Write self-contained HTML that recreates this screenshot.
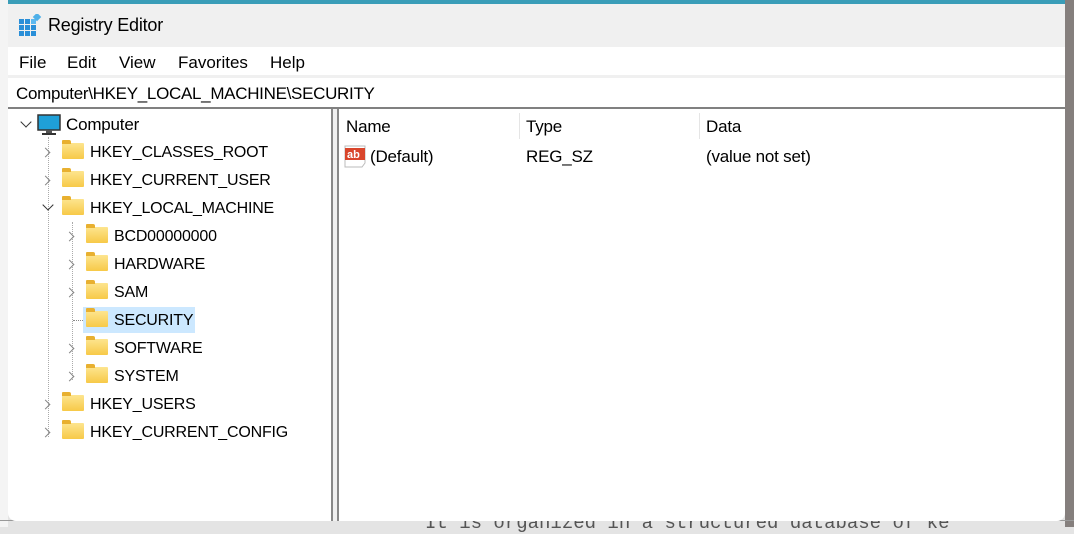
<!DOCTYPE html>
<html><head><style>
body{margin:0;width:1074px;height:527px;overflow:hidden;background:#e4e4e4;font-family:"Liberation Sans",sans-serif;position:relative;color:#000}
.abs{position:absolute}
.win{left:8px;top:4px;width:1057px;height:517px;background:#fff;border-radius:0 0 8px 8px;overflow:hidden}
.t{font-size:17px;white-space:nowrap}
.row{position:absolute;height:24px;line-height:24px;font-size:16px;white-space:nowrap;letter-spacing:-0.2px}
.fold{display:inline-block;width:22px;height:16px;vertical-align:-2px;margin-right:6px;position:relative;background:linear-gradient(#fde58f,#f7c948);border-radius:1px}
.fold:before{content:"";position:absolute;left:0;top:-3px;width:9px;height:4px;background:#e8b030;border-radius:1px 2px 0 0}
.chev{position:absolute;width:6px;height:6px;border-right:1.5px solid #888;border-bottom:1.5px solid #888;transform:rotate(-45deg)}
.chevd{position:absolute;width:7px;height:7px;border-right:1.5px solid #333;border-bottom:1.5px solid #333;transform:rotate(45deg)}
</style></head><body>
<div class="abs" style="left:0;top:0;width:1074px;height:4px;background:#3a9db8"></div>
<div class="abs" style="left:1065px;top:0;width:9px;height:527px;background:#857f7d"></div>
<div class="abs" style="left:0;top:0;width:8px;height:527px;background:#f4f4f4"></div>
<div class="abs t" style="left:425px;top:512px;font-family:'Liberation Mono',monospace;font-size:19px;color:#555">It is organized in a structured database of ke</div>
<div class="abs" style="left:0;top:520px;width:1074px;height:1px;background:#999"></div>
<div class="abs win">
 <div class="abs" style="left:0;top:0;width:1057px;height:43px;background:#f0f0f0"></div>
 <svg class="abs" style="left:11px;top:10px" width="24" height="24" viewBox="0 0 24 24">
  <g fill="#2a8fd8"><rect x="0" y="5" width="5" height="5"/><rect x="6" y="5" width="5" height="5"/><rect x="0" y="11" width="5" height="5"/><rect x="6" y="11" width="5" height="5"/><rect x="12" y="11" width="5" height="5"/><rect x="0" y="17" width="5" height="5"/><rect x="6" y="17" width="5" height="5"/><rect x="12" y="17" width="5" height="5"/><rect x="12" y="5" width="5" height="5" fill="#5bb8f0"/></g>
  <rect x="15" y="0" width="6" height="6" fill="#4fb0e8" transform="rotate(45 18 3)"/>
 </svg>
 <div class="abs t" style="left:40px;top:11px;font-size:18px;letter-spacing:-0.2px">Registry Editor</div>
 <div class="abs t" style="left:11px;top:49px">File</div>
 <div class="abs t" style="left:59px;top:49px">Edit</div>
 <div class="abs t" style="left:111px;top:49px">View</div>
 <div class="abs t" style="left:170px;top:49px">Favorites</div>
 <div class="abs t" style="left:262px;top:49px">Help</div>
 <div class="abs" style="left:0;top:71px;width:1057px;height:3px;background:#f0f0f0"></div>
 <div class="abs t" style="left:8px;top:80px;letter-spacing:-0.3px">Computer\HKEY_LOCAL_MACHINE\SECURITY</div>
 <div class="abs" style="left:0;top:103px;width:1057px;height:2px;background:#808080"></div>
 <div class="abs" style="left:323px;top:105px;width:8px;height:420px;background:#f0f0f0;border-left:2px solid #888;border-right:2px solid #888;box-sizing:border-box"></div>
 <div class="chevd" style="left:14px;top:114px"></div>
 <svg class="abs" style="left:29px;top:110px" width="24" height="22"><rect x="1" y="1" width="22" height="15" fill="#1fa0d8" stroke="#333" stroke-width="1.5"/><rect x="9" y="16" width="6" height="3" fill="#555"/><rect x="5" y="19" width="14" height="2" fill="#333"/></svg>
 <div class="row" style="left:58px;top:109px;font-size:17px">Computer</div>
 <div class="abs" style="left:40px;top:133px;width:0;height:300px;border-left:1px dotted #aaa"></div>
 <div class="abs" style="left:64px;top:218px;width:0;height:158px;border-left:1px dotted #aaa"></div>
 <div class="abs" style="left:65px;top:316px;width:12px;border-top:1px dotted #888"></div>
 <div class="chev" style="left:34px;top:145px"></div><div class="row" style="left:54px;top:137px"><span class="fold"></span>HKEY_CLASSES_ROOT</div>
 <div class="chev" style="left:34px;top:173px"></div><div class="row" style="left:54px;top:165px"><span class="fold"></span>HKEY_CURRENT_USER</div>
 <div class="chevd" style="left:36px;top:197px"></div><div class="row" style="left:54px;top:193px"><span class="fold"></span>HKEY_LOCAL_MACHINE</div>
 <div class="chev" style="left:58px;top:229px"></div><div class="row" style="left:78px;top:221px"><span class="fold"></span>BCD00000000</div>
 <div class="chev" style="left:58px;top:257px"></div><div class="row" style="left:78px;top:249px"><span class="fold"></span>HARDWARE</div>
 <div class="chev" style="left:58px;top:285px"></div><div class="row" style="left:78px;top:277px"><span class="fold"></span>SAM</div>
 <div class="abs" style="left:75px;top:303px;width:112px;height:26px;background:#cce8ff"></div>
 <div class="row" style="left:78px;top:305px"><span class="fold"></span>SECURITY</div>
 <div class="chev" style="left:58px;top:341px"></div><div class="row" style="left:78px;top:333px"><span class="fold"></span>SOFTWARE</div>
 <div class="chev" style="left:58px;top:369px"></div><div class="row" style="left:78px;top:361px"><span class="fold"></span>SYSTEM</div>
 <div class="chev" style="left:34px;top:397px"></div><div class="row" style="left:54px;top:389px"><span class="fold"></span>HKEY_USERS</div>
 <div class="chev" style="left:34px;top:425px"></div><div class="row" style="left:54px;top:417px"><span class="fold"></span>HKEY_CURRENT_CONFIG</div>
 <div class="abs" style="left:511px;top:109px;width:1px;height:26px;background:#e5e5e5"></div>
 <div class="abs" style="left:691px;top:109px;width:1px;height:26px;background:#e5e5e5"></div>
 <div class="row" style="left:338px;top:111px;font-size:17px">Name</div>
 <div class="row" style="left:518px;top:111px;font-size:17px">Type</div>
 <div class="row" style="left:698px;top:111px;font-size:17px">Data</div>
 <svg class="abs" style="left:336px;top:141px" width="24" height="24"><path d="M1 1h20v17l-3 4H1z" fill="#fff" stroke="#bbb"/><rect x="1" y="3" width="20" height="12" fill="#d9452b"/><text x="3" y="13" font-family="Liberation Sans" font-weight="bold" font-size="11" fill="#fff">ab</text></svg>
 <div class="row" style="left:362px;top:141px;font-size:17px">(Default)</div>
 <div class="row" style="left:518px;top:141px;font-size:17px">REG_SZ</div>
 <div class="row" style="left:698px;top:141px;font-size:17px">(value not set)</div>
</div>
</body></html>
